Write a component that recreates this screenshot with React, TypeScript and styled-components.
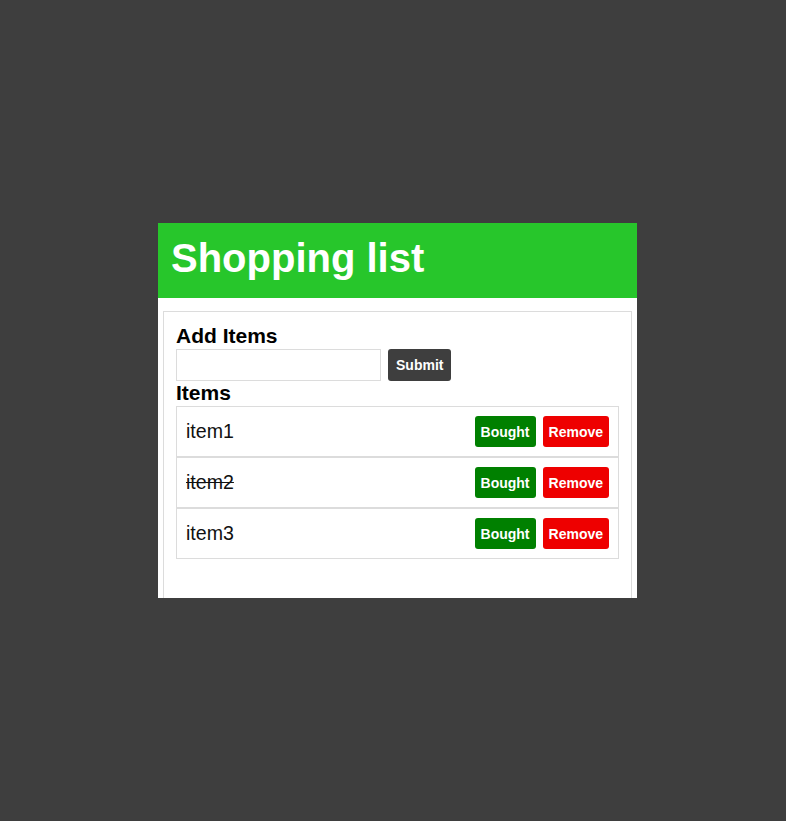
import React, { useState } from "react";
import styled, { createGlobalStyle } from "styled-components";

const GlobalStyle = createGlobalStyle`
  html, body {
    margin: 0;
    padding: 0;
    background: #3e3e3e;
    font-family: "Liberation Sans", Arial, sans-serif;
  }
`;

type Item = { id: number; name: string; bought: boolean };

const initialItems: Item[] = [
  { id: 1, name: "item1", bought: false },
  { id: 2, name: "item2", bought: true },
  { id: 3, name: "item3", bought: false },
];

const App: React.FC = () => {
  const [items, setItems] = useState<Item[]>(initialItems);
  const [text, setText] = useState("");

  const addItem = (e: React.FormEvent) => {
    e.preventDefault();
    if (!text.trim()) return;
    setItems([...items, { id: Date.now(), name: text.trim(), bought: false }]);
    setText("");
  };

  const toggleBought = (id: number) =>
    setItems(items.map((i) => (i.id === id ? { ...i, bought: !i.bought } : i)));

  const removeItem = (id: number) => setItems(items.filter((i) => i.id !== id));

  return (
    <StyledPage>
      <GlobalStyle />
      <StyledCard>
        <StyledHeader>
          <h1>Shopping list</h1>
        </StyledHeader>
        <StyledBody>
          <StyledPanel>
            <StyledHeading>Add Items</StyledHeading>
            <StyledForm onSubmit={addItem}>
              <StyledInput value={text} onChange={(e) => setText(e.target.value)} />
              <StyledButton type="submit" tone="#3e3e3e" pad="8px">
                Submit
              </StyledButton>
            </StyledForm>
            <StyledHeading>Items</StyledHeading>
            <StyledList>
              {items.map((item) => (
                <StyledRow key={item.id}>
                  <StyledItemName bought={item.bought}>{item.name}</StyledItemName>
                  <StyledActions>
                    <StyledButton tone="#008000" onClick={() => toggleBought(item.id)}>
                      Bought
                    </StyledButton>
                    <StyledButton tone="#ee0000" onClick={() => removeItem(item.id)}>
                      Remove
                    </StyledButton>
                  </StyledActions>
                </StyledRow>
              ))}
            </StyledList>
          </StyledPanel>
        </StyledBody>
      </StyledCard>
    </StyledPage>
  );
};

const StyledPage = styled.div`
  min-height: 100vh;
  box-sizing: border-box;
  padding-left: 9px;
  display: flex;
  align-items: center;
  justify-content: center;
`;

const StyledCard = styled.div`
  width: 479px;
  height: 375px;
  background: #fff;
  overflow: hidden;
  display: flex;
  flex-direction: column;
`;

const StyledHeader = styled.header`
  background: #27c62b;
  height: 75px;
  box-sizing: border-box;
  flex-shrink: 0;
  padding: 0 13px 5px;
  display: flex;
  align-items: center;

  h1 {
    margin: 0;
    color: #fff;
    font-size: 40px;
    font-weight: bold;
    line-height: 46px;
  }
`;

const StyledBody = styled.div`
  padding: 13px 5px 0;
`;

const StyledPanel = styled.section`
  border: 1px solid #dcdcdc;
  padding: 12px;
  min-height: 320px;
`;

const StyledHeading = styled.h2`
  margin: 0;
  font-size: 21px;
  font-weight: bold;
  color: #000;
`;

const StyledForm = styled.form`
  display: flex;
  gap: 7px;
  margin-top: 1px;
`;

const StyledInput = styled.input`
  box-sizing: border-box;
  width: 205px;
  height: 32px;
  border: 1px solid #dcdcdc;
  padding: 0 6px;
  font-size: 16px;
  outline: none;
`;

const StyledButton = styled.button<{ tone: string; pad?: string }>`
  height: ${(p) => (p.pad ? "32px" : "31px")};
  padding: 0 ${(p) => p.pad || "6px"};
  border: none;
  border-radius: 3px;
  background: ${(p) => p.tone};
  color: #fff;
  font-family: "Liberation Sans", Arial, sans-serif;
  font-size: 14px;
  font-weight: bold;
  cursor: pointer;
`;

const StyledList = styled.ul`
  list-style: none;
  margin: 1px 0 0;
  padding: 0;
`;

const StyledRow = styled.li`
  display: flex;
  align-items: center;
  justify-content: space-between;
  border: 1px solid #dcdcdc;
  padding: 9px 9px 9px 9px;
`;

const StyledItemName = styled.span<{ bought: boolean }>`
  font-size: 19.6px;
  color: #111;
  text-decoration: ${(p) => (p.bought ? "line-through" : "none")};
`;

const StyledActions = styled.div`
  display: flex;
  gap: 7px;
`;

export default App;
